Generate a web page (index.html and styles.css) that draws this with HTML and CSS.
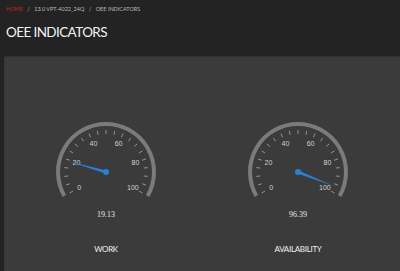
FILE: index.html
```html
<!DOCTYPE html>
<html>
<head>
    <meta charset="utf-8">
    <title>OEE INDICATORS</title>
    <link rel="stylesheet" href="styles.css">
    <script>
        // Build a dial with ring, ticks, labels and needle
        function drawGauge(svg, value) {
            const ns = 'http://www.w3.org/2000/svg';
            const cx = 60, cy = 60;
            const toXY = (deg, r) => {
                const a = deg * Math.PI / 180;
                return [cx + r * Math.cos(a), cy - r * Math.sin(a)];
            };
            const angleOf = v => 210 - v * 2.4;

            const [sx, sy] = toXY(210, 48);
            const [ex, ey] = toXY(-30, 48);
            const ring = document.createElementNS(ns, 'path');
            ring.setAttribute('d', `M${sx} ${sy} A48 48 0 1 1 ${ex} ${ey}`);
            ring.setAttribute('class', 'ring');
            svg.appendChild(ring);

            for (let v = 0; v <= 100; v += 5) {
                const [x1, y1] = toXY(angleOf(v), 42);
                const [x2, y2] = toXY(angleOf(v), 38);
                const tick = document.createElementNS(ns, 'line');
                tick.setAttribute('x1', x1);
                tick.setAttribute('y1', y1);
                tick.setAttribute('x2', x2);
                tick.setAttribute('y2', y2);
                tick.setAttribute('class', 'tick');
                svg.appendChild(tick);
            }

            for (let v = 0; v <= 100; v += 20) {
                const [x, y] = toXY(angleOf(v), 31);
                const label = document.createElementNS(ns, 'text');
                label.setAttribute('x', x);
                label.setAttribute('y', y + 2.5);
                label.setAttribute('class', 'tick-label');
                label.textContent = v;
                svg.appendChild(label);
            }

            const a = angleOf(value) * Math.PI / 180;
            const tip = toXY(angleOf(value), 39);
            const px = Math.sin(a) * 1.6, py = Math.cos(a) * 1.6;
            const needle = document.createElementNS(ns, 'polygon');
            needle.setAttribute('points', `${cx + px},${cy + py} ${tip[0]},${tip[1]} ${cx - px},${cy - py}`);
            needle.setAttribute('class', 'needle');
            svg.appendChild(needle);

            const hub = document.createElementNS(ns, 'circle');
            hub.setAttribute('cx', cx);
            hub.setAttribute('cy', cy);
            hub.setAttribute('r', 3);
            hub.setAttribute('class', 'needle');
            svg.appendChild(hub);
        }

        document.addEventListener('DOMContentLoaded', function() {
            document.querySelectorAll('.gauge').forEach(g => {
                drawGauge(g.querySelector('svg'), parseFloat(g.dataset.value));
            });
        });
    </script>
</head>
<body>
    <div class="header">
        <div class="breadcrumb">
            <span class="crumb-home">HOME</span>
            <span class="sep">/</span>
            <span>13.0 VPT-4022_24Q</span>
            <span class="sep">/</span>
            <span>OEE INDICATORS</span>
        </div>
        <h1 class="title">OEE INDICATORS</h1>
    </div>
    <div class="panel">
        <div class="gauge" data-value="19.13">
            <svg width="120" height="96" viewBox="0 0 120 96"></svg>
            <div class="gauge-value">19.13</div>
            <div class="gauge-name">WORK</div>
        </div>
        <div class="gauge" data-value="96.39">
            <svg width="120" height="96" viewBox="0 0 120 96"></svg>
            <div class="gauge-value">96.39</div>
            <div class="gauge-name">AVAILABILITY</div>
        </div>
    </div>
</body>
</html>
```

FILE: styles.css
```css
body {
    margin: 0;
    padding: 0;
    background-color: #232323;
    font-family: Lato, "Liberation Sans", sans-serif;
    color: #e6e6e6;
    overflow: hidden;
}

.header {
    height: 56px;
    padding: 0 6px;
    box-sizing: border-box;
}

.breadcrumb {
    padding-top: 5px;
    font-size: 5.5px;
    line-height: 9px;
    color: #b8b8b8;
}

.breadcrumb .sep {
    margin: 0 3px;
}

.crumb-home {
    color: #c0262c;
}

.title {
    margin: 8px 0 0;
    font-size: 13.5px;
    font-weight: 400;
    letter-spacing: -0.6px;
    line-height: 20px;
    color: #f2f2f2;
}

.panel {
    margin-left: 4px;
    height: 215px;
    background-color: #3b3b3b;
    border-left: 1px solid #2c3a44;
    border-top: 1px solid #2a3238;
    box-sizing: border-box;
    display: flex;
    padding: 55px 0 0 5px;
}

.gauge {
    width: 192px;
    display: flex;
    flex-direction: column;
    align-items: center;
}

.gauge svg {
    display: block;
}

.ring {
    fill: none;
    stroke: #7b7b7b;
    stroke-width: 4;
}

.tick {
    stroke: #a8a8a8;
    stroke-width: 0.8;
}

.tick-label {
    fill: #d0d0d0;
    font-family: "Liberation Sans", sans-serif;
    font-size: 7px;
    text-anchor: middle;
}

.needle {
    fill: #2b7fd4;
}

.gauge-value {
    margin-top: 2px;
    font-family: "Liberation Serif", serif;
    font-size: 8px;
    color: #e8e8e8;
}

.gauge-name {
    margin-top: 25px;
    font-size: 8px;
    letter-spacing: -0.3px;
    color: #f0f0f0;
}
```
